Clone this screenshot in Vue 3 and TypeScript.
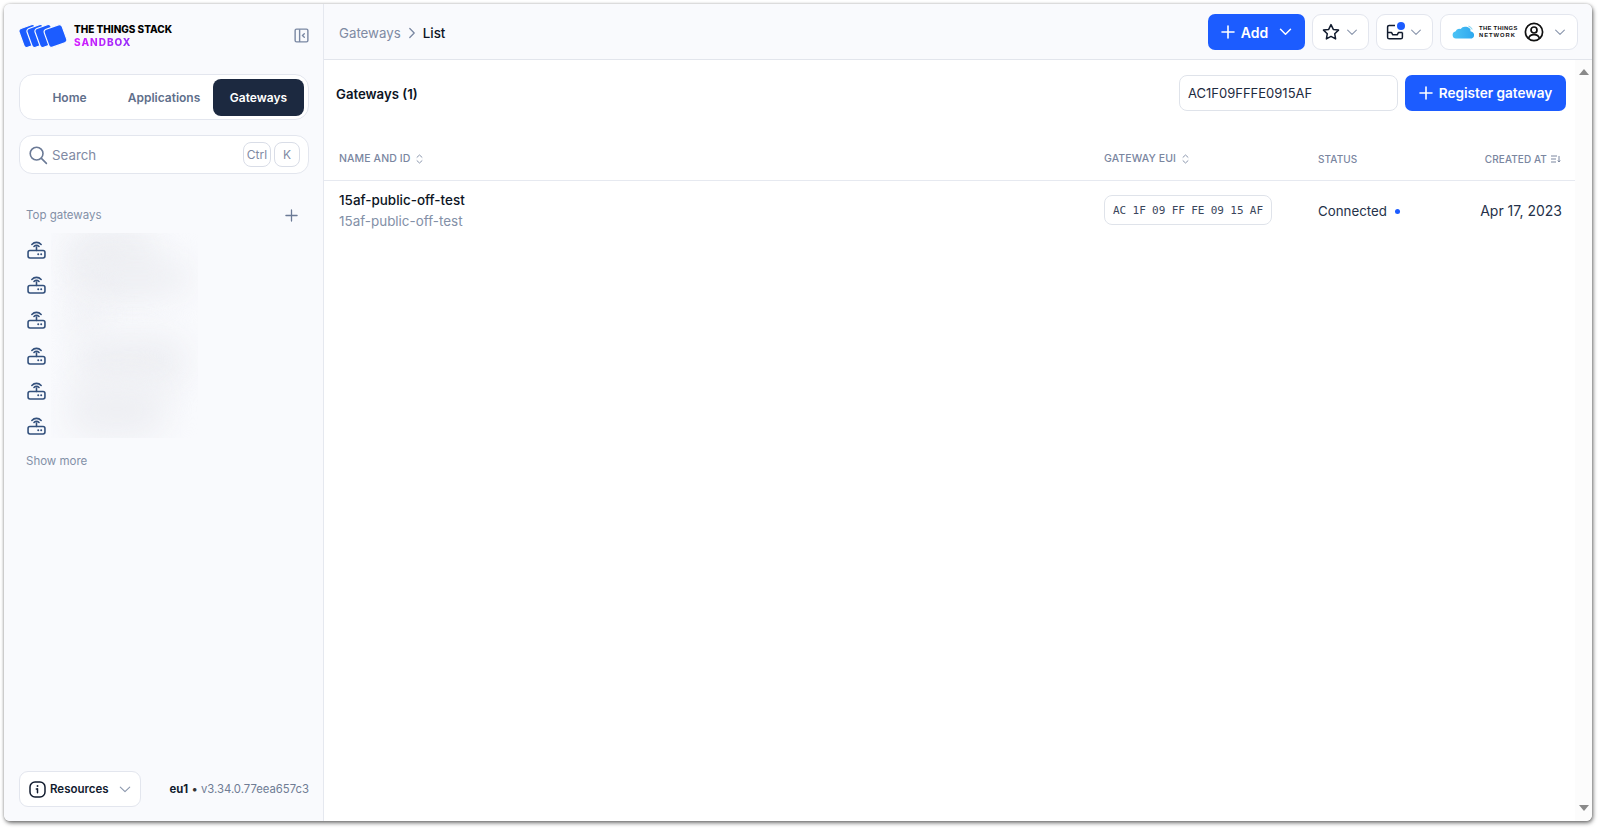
<script setup lang="ts">
interface TableColumn {
  label: string
  sort: 'both' | 'desc' | 'none'
  cls: string
}
const columns: TableColumn[] = [
  { label: 'Name and ID', sort: 'both', cls: '' },
  { label: 'Gateway EUI', sort: 'both', cls: '' },
  { label: 'Status', sort: 'none', cls: 'narrow' },
  { label: 'Created at', sort: 'desc', cls: 'narrow end' },
]
const eui: string[] = ['AC', '1F', '09', 'FF', 'FE', '09', '15', 'AF']
const topGateways: number[] = [1, 2, 3, 4, 5, 6]
</script>

<template>
  <div class="page">
    <div class="window">
      <aside class="sidebar">
        <div class="brand">
          <div class="logo">
            <svg width="50" height="26" viewBox="0 0 50 26">
              <g fill="#1c5cff" stroke="#f9fafd" stroke-width="1.2">
                <rect x="2" y="3" width="17" height="20" rx="3" transform="rotate(-20 10.500 13)" />
                <rect x="10" y="3" width="17" height="20" rx="3" transform="rotate(-20 18.500 13)" />
                <rect x="18" y="3" width="17" height="20" rx="3" transform="rotate(-20 26.500 13)" />
                <rect x="27" y="3.500" width="19" height="19" rx="3" transform="rotate(-20 36.500 13)" />
              </g>
            </svg>
            <div class="logo-text">
              <span class="logo-top">THE THINGS STACK</span>
              <span class="logo-sub">SANDBOX</span>
            </div>
          </div>
          <svg class="collapse" width="15" height="15" viewBox="0 0 16 16" fill="none" stroke="#7a88a3" stroke-width="1.5">
            <rect x="1.200" y="1.200" width="13.600" height="13.600" rx="1.500" />
            <path d="M6 1.200v13.600" />
            <path d="M11 6.200 9 8l2 1.800" stroke-linecap="round" stroke-linejoin="round" />
          </svg>
        </div>

        <nav class="tabs">
          <span class="tab home">Home</span>
          <span class="tab apps">Applications</span>
          <span class="tab active">Gateways</span>
        </nav>

        <div class="search">
          <svg width="20" height="20" viewBox="0 0 20 20" fill="none" stroke="#6b7a96" stroke-width="1.6" stroke-linecap="round">
            <circle cx="8.600" cy="8.600" r="6.400" />
            <path d="m13.400 13.400 5 5" />
          </svg>
          <span class="search-label">Search</span>
          <span class="key ctrl">Ctrl</span>
          <span class="key k">K</span>
        </div>

        <div class="top-head">
          <span>Top gateways</span>
          <svg width="13" height="13" viewBox="0 0 14 14" fill="none" stroke="#6b7a96" stroke-width="1.400" stroke-linecap="round">
            <path d="M7 1v12M1 7h12" />
          </svg>
        </div>

        <div class="top-list">
          <div v-for="row in topGateways" :key="row" class="top-row">
            <svg width="19" height="19" viewBox="0 0 18 18" fill="none" stroke="#33507c" stroke-width="1.500" stroke-linecap="round">
              <rect x="1" y="10" width="16" height="7" rx="1.800" />
              <path d="M9 10V6.600" />
              <path d="M4.600 4.200C7 1.600 11 1.600 13.400 4.200" />
              <path d="M6.600 6.100c1.300-1.300 3.500-1.300 4.800 0" />
              <path d="M10.600 13.500h.1M13.400 13.500h.1" stroke-width="1.800" />
            </svg>
          </div>
          <div class="blur-mask">
            <i class="blob b1"></i>
            <i class="blob b2"></i>
            <i class="blob b3"></i>
            <i class="blob b4"></i>
            <i class="blob b5"></i>
          </div>
        </div>

        <span class="show-more">Show more</span>

        <div class="foot">
          <button class="resources" type="button">
            <svg width="17" height="17" viewBox="0 0 17 17" fill="none" stroke="#111b2e" stroke-width="1.500">
              <rect x="1" y="1" width="15" height="15" rx="5" />
              <path d="M8.500 7.800v4M7.300 8h1.200" stroke-linecap="round" />
              <path d="M8.500 5h.02" stroke-width="1.900" stroke-linecap="round" />
            </svg>
            <span>Resources</span>
            <svg class="res-chev" width="12" height="7" viewBox="0 0 14 8" fill="none" stroke="#8b97ad" stroke-width="1.300" stroke-linecap="round" stroke-linejoin="round">
              <path d="m1.500 1.200 5.500 5.300 5.500-5.300" />
            </svg>
          </button>
          <div class="version"><b>eu1</b> <span class="dot-sep">•</span> <span class="ver">v3.34.0.77eea657c3</span></div>
        </div>
      </aside>

      <div class="content">
        <header class="topbar">
          <div class="crumbs">
            <span class="crumb-link">Gateways</span>
            <svg width="8" height="12" viewBox="0 0 8 12" fill="none" stroke="#7a88a3" stroke-width="1.300" stroke-linecap="round" stroke-linejoin="round">
              <path d="m1.800 1.500 4.400 4.500-4.400 4.500" />
            </svg>
            <span class="crumb-cur">List</span>
          </div>
          <div class="actions">
            <button class="primary add" type="button">
              <svg width="14" height="14" viewBox="0 0 14 14" fill="none" stroke="#fff" stroke-width="1.600" stroke-linecap="round"><path d="M7 1v12M1 7h12" /></svg>
              <span>Add</span>
              <svg class="add-chev" width="13" height="8" viewBox="0 0 13 8" fill="none" stroke="#fff" stroke-width="1.500" stroke-linecap="round" stroke-linejoin="round"><path d="m1.500 1.300 5 4.900 5-4.900" /></svg>
            </button>
            <button class="ghost icon-btn" type="button">
              <svg width="18" height="18" viewBox="0 0 18 18" fill="none" stroke="#111b2e" stroke-width="1.500" stroke-linejoin="round">
                <path d="m9 1.600 2.300 4.800 5.200.7-3.800 3.600.9 5.200L9 13.400l-4.600 2.500.9-5.200-3.800-3.600 5.200-.7z" />
              </svg>
              <svg width="12" height="7" viewBox="0 0 13 8" fill="none" stroke="#8b97ad" stroke-width="1.300" stroke-linecap="round" stroke-linejoin="round"><path d="m1.500 1.300 5 4.900 5-4.900" /></svg>
            </button>
            <button class="ghost icon-btn inbox" type="button">
              <svg width="18" height="18" viewBox="0 0 18 18" fill="none" stroke="#111b2e" stroke-width="1.500" stroke-linejoin="round">
                <path d="M9 2.400H3.200A1.600 1.600 0 0 0 1.600 4v10.200a1.600 1.600 0 0 0 1.600 1.600h11.600a1.600 1.600 0 0 0 1.600-1.600V9.600" />
                <path d="M1.600 9.600h4l1.200 2.200h4.400l1.200-2.200h4" />
              </svg>
              <i class="badge"></i>
              <svg width="12" height="7" viewBox="0 0 13 8" fill="none" stroke="#8b97ad" stroke-width="1.300" stroke-linecap="round" stroke-linejoin="round"><path d="m1.500 1.300 5 4.900 5-4.900" /></svg>
            </button>
            <button class="ghost user" type="button">
              <svg width="24" height="14" viewBox="0 0 24 14">
                <defs>
                  <linearGradient id="ttnCloud" x1="0" y1="0" x2="1" y2="0">
                    <stop offset="0" stop-color="#4cc3f5" />
                    <stop offset="1" stop-color="#2fa8ef" />
                  </linearGradient>
                </defs>
                <path fill="url(#ttnCloud)" d="M4 13.500a3.600 3.600 0 0 1-.6-7.100 4.400 4.400 0 0 1 5.200-2.300A5.600 5.600 0 0 1 18.700 6.400 3.700 3.700 0 0 1 19.800 13.500z" />
                <path d="M16.500 1.200c1.600.3 3 1.400 3.600 3.200M17 3c.8.2 1.300.7 1.600 1.500" fill="none" stroke="#5fc6ee" stroke-width=".9" />
              </svg>
              <span class="ttn"><span>THE THINGS</span><span class="ttn-2">NETWORK</span></span>
              <svg class="avatar" width="20" height="20" viewBox="0 0 20 20" fill="none" stroke="#111" stroke-width="1.700">
                <circle cx="10" cy="10" r="8.600" />
                <circle cx="10" cy="8" r="3" />
                <path d="M4.600 16.400c.7-2.600 2.800-3.700 5.400-3.700s4.700 1.100 5.400 3.700" />
              </svg>
              <svg class="user-chev" width="12" height="7" viewBox="0 0 13 8" fill="none" stroke="#8b97ad" stroke-width="1.300" stroke-linecap="round" stroke-linejoin="round"><path d="m1.500 1.300 5 4.900 5-4.900" /></svg>
            </button>
          </div>
        </header>

        <div class="body">
          <main class="main">
            <div class="list-head">
              <h1>Gateways (1)</h1>
              <input class="filter" value="AC1F09FFFE0915AF" />
              <button class="primary register" type="button">
                <svg width="14" height="14" viewBox="0 0 14 14" fill="none" stroke="#fff" stroke-width="1.600" stroke-linecap="round"><path d="M7 1v12M1 7h12" /></svg>
                <span>Register gateway</span>
              </button>
            </div>

            <div class="table">
              <div class="tr thead">
                <div v-for="col in columns" :key="col.label" class="th" :class="col.cls">
                  <span>{{ col.label }}</span>
                  <svg v-if="col.sort === 'both'" width="7" height="10" viewBox="0 0 7 10" fill="none" stroke="#8b97ad" stroke-width="1" stroke-linecap="round" stroke-linejoin="round">
                    <path d="m1 3.300 2.500-2.300L6 3.300M1 6.700 3.500 9 6 6.700" />
                  </svg>
                  <svg v-else-if="col.sort === 'desc'" width="10" height="8" viewBox="0 0 10 8" fill="none" stroke="#7a869f" stroke-width="1">
                    <path d="M0 1h6M0 4h5M0 7h5M8 1v6M6.800 5.500 8 7l1.200-1.500" />
                  </svg>
                </div>
              </div>
              <div class="tr tbody">
                <div class="name-cell">
                  <span class="name">15af-public-off-test</span>
                  <span class="gid">15af-public-off-test</span>
                </div>
                <div>
                  <span class="eui"><span v-for="(part, i) in eui" :key="i">{{ part }}</span></span>
                </div>
                <div class="status">Connected <i class="status-dot"></i></div>
                <div class="date">Apr 17, 2023</div>
              </div>
            </div>
          </main>
          <div class="scrollbar">
            <i class="arrow up"></i>
            <i class="arrow down"></i>
          </div>
        </div>
      </div>
    </div>
  </div>
</template>

<style>
html, body { margin: 0; background: #fff; }
</style>

<style scoped>
.page {
  height: 828px;
  box-sizing: border-box;
  padding: 4px 8px 7px 4px;
  background: #fff;
  font-family: Inter, "Noto Sans", sans-serif;
  color: #111b2e;
  overflow: hidden;
}
.window {
  display: flex;
  height: 100%;
  border-radius: 6px;
  overflow: hidden;
  background: #fff;
  box-shadow: 1px 2px 4px rgba(0, 0, 0, .55), 0 0 3px rgba(0, 0, 0, .2);
}
.sidebar {
  width: 320px;
  flex: none;
  box-sizing: border-box;
  display: flex;
  flex-direction: column;
  padding: 0 14px 0 15px;
  background: #f9fafd;
  border-right: 1px solid #e5e8ef;
}
.brand {
  display: flex;
  align-items: center;
  justify-content: space-between;
  height: 52px;
  padding-top: 7px;
  box-sizing: border-box;
  margin-top: 2px;
}
.logo { display: flex; align-items: center; gap: 5px; }
.logo-text { display: flex; flex-direction: column; font-weight: 800; font-size: 10px; letter-spacing: 0; line-height: 13px; }
.logo-top { color: #000; }
.logo-sub { color: #c81eff; background: linear-gradient(90deg, #d61cff, #6a3cf5); -webkit-background-clip: text; background-clip: text; -webkit-text-fill-color: transparent; letter-spacing: 1px; }
.tabs {
  margin-top: 16px;
  height: 46px;
  box-sizing: border-box;
  display: flex;
  align-items: center;
  background: #fff;
  border: 1px solid #e3e6ee;
  border-radius: 14px;
  padding: 0 4px;
  font-size: 12px;
  font-weight: 600;
  color: #5f6f8b;
}
.tab { display: flex; align-items: center; justify-content: center; height: 37px; border-radius: 8px; }
.home { width: 91px; }
.apps { width: 98px; }
.active { width: 91px; background: #1c2940; color: #fff; margin-left: auto; }
.search {
  margin-top: 15px;
  height: 39px;
  box-sizing: border-box;
  display: flex;
  align-items: center;
  background: #fff;
  border: 1px solid #e3e6ee;
  border-radius: 13px;
  padding: 0 8px;
  color: #7f8aa3;
  font-size: 13.300px;
}
.search-label { margin-left: 4px; flex: 1; }
.key {
  height: 25px;
  box-sizing: border-box;
  border: 1px solid #d9dde7;
  border-radius: 8px;
  display: flex;
  align-items: center;
  justify-content: center;
  font-size: 12px;
}
.ctrl { width: 28px; }
.k { width: 26px; margin-left: 3px; }
.top-head {
  margin-top: 33px;
  padding: 0 11px 0 7px;
  display: flex;
  align-items: center;
  justify-content: space-between;
  height: 16px;
  font-size: 11.500px;
  color: #8390a7;
}
.top-list { position: relative; margin-top: 7px; padding-left: 8px; display: flex; flex-direction: column; }
.top-row { height: 35.300px; display: flex; align-items: center; }
.top-row svg { margin-top: 3px; }
.blur-mask {
  position: absolute;
  left: 32px;
  top: 3px;
  width: 147px;
  height: 205px;
  overflow: hidden;
}
.blob { position: absolute; background: #eeeff3; border-radius: 30px; filter: blur(16px); }
.b1 { left: 14px; top: -8px; width: 90px; height: 66px; }
.b2 { left: 30px; top: 28px; width: 110px; height: 34px; }
.b3 { left: 20px; top: 62px; width: 28px; height: 40px; }
.b4 { left: 24px; top: 102px; width: 112px; height: 52px; }
.b5 { left: 16px; top: 146px; width: 100px; height: 60px; }
.show-more { margin-top: 11px; padding-left: 7px; font-size: 11.500px; color: #8390a7; line-height: 16px; }
.foot { margin-top: auto; margin-bottom: 14px; display: flex; align-items: center; justify-content: space-between; }
.resources {
  width: 122px;
  height: 36px;
  box-sizing: border-box;
  display: flex;
  align-items: center;
  background: #fff;
  border: 1px solid #e3e6ee;
  border-radius: 9px;
  padding: 0 0 0 9px;
  font: 600 11.500px Inter, "Noto Sans", sans-serif;
  color: #111b2e;
}
.resources span { margin-left: 4px; }
.res-chev { margin-left: 10px; }
.version { font-size: 11.300px; color: #111b2e; white-space: nowrap; }
.version b { font-weight: 700; }
.ver { color: #6f7c94; }
.dot-sep { color: #333; }
.content { flex: 1; min-width: 0; display: flex; flex-direction: column; }
.topbar {
  height: 56px;
  flex: none;
  box-sizing: border-box;
  background: #f9fafd;
  border-bottom: 1px solid #e2e5ec;
  display: flex;
  align-items: center;
  justify-content: space-between;
  padding: 0 14px 0 15px;
}
.crumbs { display: flex; align-items: center; gap: 7px; font-size: 13.300px; margin-top: 2px; }
.crumb-link { color: #7f8aa3; }
.crumb-cur { font-weight: 500; color: #0c1424; }
.actions { display: flex; gap: 7px; align-items: center; margin-top: 1px; }
button { cursor: pointer; }
.primary {
  display: flex;
  align-items: center;
  justify-content: center;
  height: 36px;
  border: 0;
  border-radius: 7px;
  background: #1c5cff;
  color: #fff;
  font: 600 14px Inter, "Noto Sans", sans-serif;
  padding: 0;
}
.add { width: 97px; gap: 6px; }
.add-chev { margin-left: 5px; }
.ghost {
  display: flex;
  align-items: center;
  height: 36px;
  box-sizing: border-box;
  background: #fff;
  border: 1px solid #e3e6ee;
  border-radius: 9px;
  padding: 0;
}
.icon-btn { width: 57px; padding-left: 9px; gap: 6px; position: relative; }
.badge { position: absolute; left: 20px; top: 7px; width: 8px; height: 8px; border-radius: 50%; background: #1c5cff; box-shadow: 0 0 0 1px #fff; }
.user { width: 138px; padding-left: 11px; }
.ttn { display: flex; flex-direction: column; margin-left: 3px; font-size: 5.800px; font-weight: 800; line-height: 7px; letter-spacing: .35px; color: #111; text-align: left; }
.ttn-2 { letter-spacing: 1px; }
.avatar { margin-left: 6px; }
.user-chev { margin-left: 10px; }
.body { flex: 1; min-height: 0; display: flex; }
.main { flex: 1; min-width: 0; }
.list-head {
  display: flex;
  align-items: center;
  height: 36px;
  margin-top: 15px;
  padding-right: 9px;
}
.list-head h1 { margin: 2px 0 0 12px; flex: 1; font-size: 13.200px; font-weight: 600; color: #0c1424; }
.filter {
  width: 219px;
  height: 36px;
  box-sizing: border-box;
  border: 1px solid #dfe3ea;
  border-radius: 8px;
  padding: 0 8px;
  font: 400 13px Inter, "Noto Sans", sans-serif;
  color: #1d2a40;
  outline: 0;
}
.register { width: 161px; margin-left: 7px; gap: 6px; font-size: 13.600px; }
.table { margin-top: 29px; }
.tr {
  display: grid;
  grid-template-columns: 765px 214px 1fr 120px;
  padding: 0 13px 0 15px;
  border-bottom: 1px solid #e6e9f0;
}
.thead { height: 41px; align-items: center; padding-bottom: 3px; padding-right: 14px; box-sizing: border-box; }
.th {
  display: flex;
  align-items: center;
  gap: 6px;
  font-size: 10.500px;
  font-weight: 500;
  text-transform: uppercase;
  color: #7a869f;
  letter-spacing: .1px;
}
.th.narrow { font-size: 10px; }
.th.end { justify-content: flex-end; gap: 4px; }
.tbody { border-bottom: 0; padding-top: 9px; }
.name-cell { display: flex; flex-direction: column; font-size: 13.450px; line-height: 20.500px; }
.name { font-weight: 500; color: #0c1424; }
.gid { color: #8390a7; }
.eui {
  display: inline-flex;
  gap: 6.300px;
  align-items: center;
  height: 30px;
  box-sizing: border-box;
  padding: 0 8px;
  border: 1px solid #dfe3ea;
  border-radius: 8px;
  font: 400 11px "DejaVu Sans Mono", "Liberation Mono", monospace;
  color: #3a465c;
  margin-top: 5px;
}
.status { font-size: 13.300px; color: #25324a; display: flex; align-items: center; gap: 8px; height: 20px; margin-top: 11px; }
.status-dot { width: 5px; height: 5px; border-radius: 50%; background: #1c5cff; }
.date { font-size: 14px; color: #25324a; text-align: right; margin-top: 11px; line-height: 20px; }
.scrollbar {
  width: 17px;
  flex: none;
  background: #fcfcfc;
  display: flex;
  flex-direction: column;
  justify-content: space-between;
  align-items: center;
  padding: 9px 0 10px;
  box-sizing: border-box;
}
.arrow { width: 0; height: 0; border-left: 5.500px solid transparent; border-right: 5.500px solid transparent; }
.up { border-bottom: 6px solid #8a8a8a; }
.down { border-top: 6px solid #8a8a8a; }
</style>
